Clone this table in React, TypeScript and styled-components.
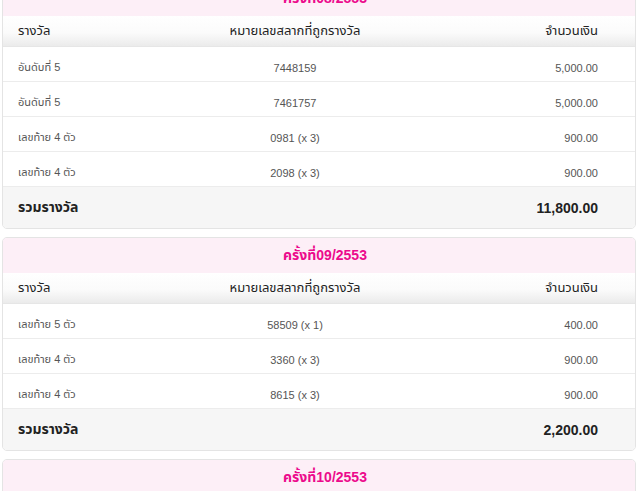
import React from "react";
import styled, { createGlobalStyle } from "styled-components";

const Global = createGlobalStyle`
  html, body { margin: 0; padding: 0; background: #fff; }
  body { font-family: "Liberation Sans", "Noto Sans Thai", "Noto Sans", sans-serif; overflow: hidden; }
`;

const Page = styled.div`
  display: flex;
  flex-direction: column;
  gap: 8px;
  padding: 0 4px 0 2px;
  margin-top: -20px;
`;

const Card = styled.section`
  border: 1px solid #e4e4e4;
  border-radius: 5px;
  overflow: hidden;
  background: #fff;
`;

const Title = styled.div`
  height: 35px;
  background: #fdeff7;
  color: #ec0a8c;
  font-weight: bold;
  font-size: 14px;
  display: flex;
  align-items: center;
  justify-content: center;
  padding-left: 12px;
`;

const Grid = styled.div`
  display: grid;
  grid-template-columns: 180px 194px 1fr;
  padding: 0 37px 0 15px;
  align-items: center;
`;

const Header = styled(Grid)`
  height: 31px;
  background: linear-gradient(#ffffff 0%, #fbfbfb 55%, #ebebeb 100%);
  border-bottom: 1px solid #e6e6e6;
  box-sizing: border-box;
  font-size: 13px;
  color: #222;
`;

const Row = styled(Grid)`
  height: 35px;
  box-sizing: border-box;
  padding-top: 7px;
  border-bottom: 1px solid #ececec;
  font-size: 11px;
  color: #555;
`;

const Total = styled(Grid)`
  height: 41px;
  background: #f6f6f6;
  font-size: 14px;
  font-weight: bold;
  color: #222;
`;

const Cell = styled.div<{ $align?: "left" | "center" | "right" }>`
  text-align: ${(p) => p.$align ?? "left"};
  white-space: nowrap;
`;

type Item = { name: string; num: string; amount: string };
type Draw = { title: string; items: Item[]; total: string };

const draws: Draw[] = [
  {
    title: "ครั้งที่08/2553",
    items: [
      { name: "อันดับที่ 5", num: "7448159", amount: "5,000.00" },
      { name: "อันดับที่ 5", num: "7461757", amount: "5,000.00" },
      { name: "เลขท้าย 4 ตัว", num: "0981 (x 3)", amount: "900.00" },
      { name: "เลขท้าย 4 ตัว", num: "2098 (x 3)", amount: "900.00" },
    ],
    total: "11,800.00",
  },
  {
    title: "ครั้งที่09/2553",
    items: [
      { name: "เลขท้าย 5 ตัว", num: "58509 (x 1)", amount: "400.00" },
      { name: "เลขท้าย 4 ตัว", num: "3360 (x 3)", amount: "900.00" },
      { name: "เลขท้าย 4 ตัว", num: "8615 (x 3)", amount: "900.00" },
    ],
    total: "2,200.00",
  },
  {
    title: "ครั้งที่10/2553",
    items: [
      { name: "เลขท้าย 4 ตัว", num: "1234 (x 3)", amount: "900.00" },
    ],
    total: "900.00",
  },
];

export default function App() {
  return (
    <>
      <Global />
      <Page>
        {draws.map((d) => (
          <Card key={d.title}>
            <Title>{d.title}</Title>
            <Header>
              <Cell>รางวัล</Cell>
              <Cell $align="center">หมายเลขสลากที่ถูกรางวัล</Cell>
              <Cell $align="right">จำนวนเงิน</Cell>
            </Header>
            {d.items.map((it, i) => (
              <Row key={i}>
                <Cell>{it.name}</Cell>
                <Cell $align="center">{it.num}</Cell>
                <Cell $align="right">{it.amount}</Cell>
              </Row>
            ))}
            <Total>
              <Cell>รวมรางวัล</Cell>
              <Cell />
              <Cell $align="right">{d.total}</Cell>
            </Total>
          </Card>
        ))}
      </Page>
    </>
  );
}
